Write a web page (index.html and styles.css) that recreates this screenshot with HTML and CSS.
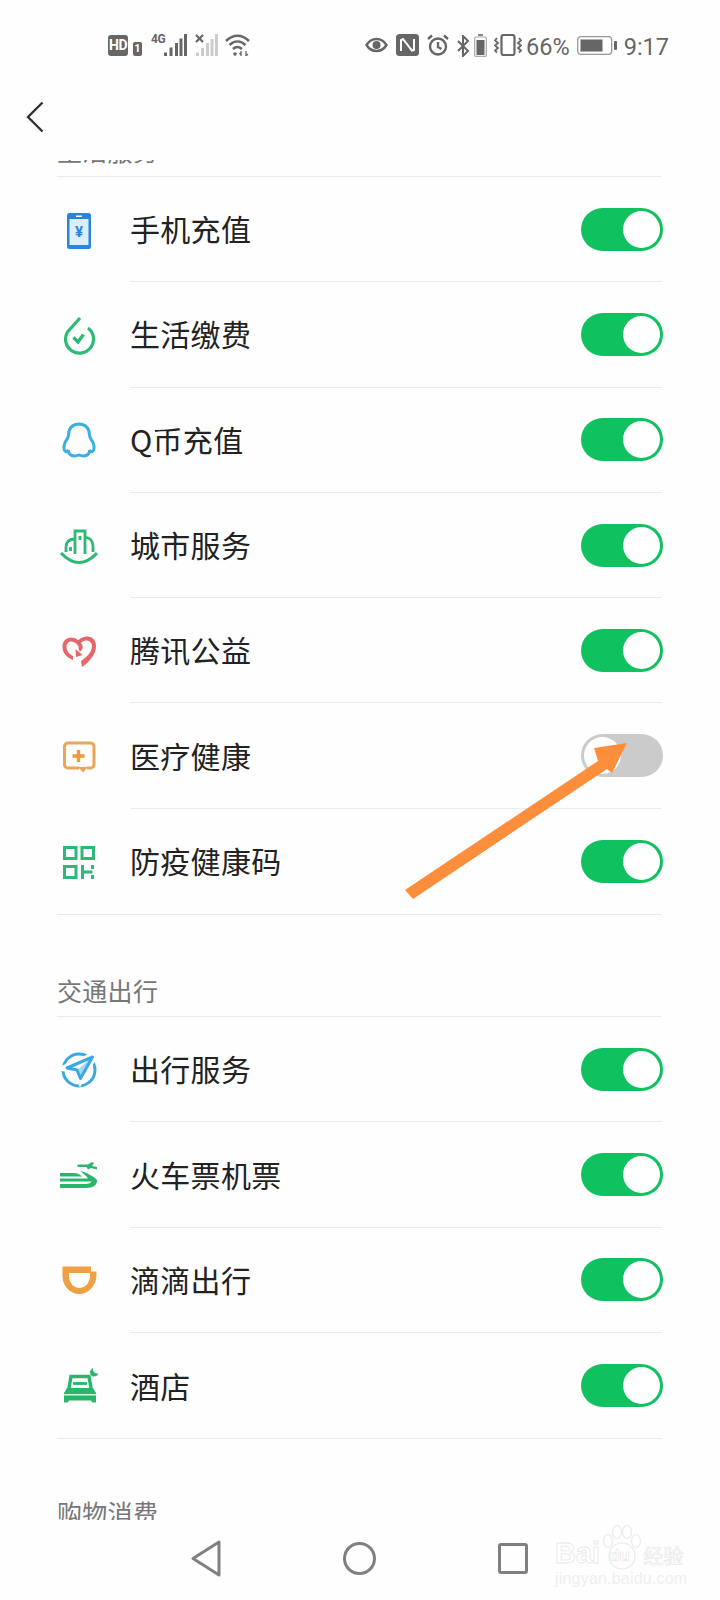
FILE: index.html
```html
<!DOCTYPE html>
<html lang="zh-CN">
<head>
    <meta charset="UTF-8" />
    <meta name="viewport" content="width=device-width, initial-scale=1.0">
    <title>服务管理</title>
    <link rel="stylesheet" href="styles.css">
</head>
<body>
<div class="phone">
    <div class="status-bar">
        <div class="status-left">
            <span class="hd-badge">HD</span>
            <span class="sim-badge">1</span>
            <span class="net-label">4G</span>
            <svg class="bars" width="24" height="22" viewBox="0 0 24 22"><path d="M1 18.500h3V22H1zM6.500 13.500h3V22h-3zM12 9h3v13h-3zM16.500 4.500h3V22h-3zM21 0h3v22h-3z" fill="#666"/></svg>
            <svg class="bars-off" width="23" height="22" viewBox="0 0 23 22"><path d="M1 18.500h3V22H1zM6 14h3v8H6zM11 9h3v13h-3zM15.500 5h3v17h-3zM20 0h3v22h-3z" fill="#ccc"/><path d="M1 1l7 7M8 1L1 8" stroke="#666" stroke-width="2.200"/></svg>
            <svg class="wifi" width="25" height="22" viewBox="0 0 25 22" fill="none" stroke="#666" stroke-width="2.500"><path d="M1 7c7-7 16-7 23 0M4.500 11c5-4.800 11-4.800 16 0M8 15c2.800-2.500 6-2.500 9 0"/><circle cx="10" cy="20" r="1.800" fill="#666" stroke="none"/><path d="M16 17v5M21 17v5M14.500 20l2-2M23 20l-2 2" stroke-width="1.300"/></svg>
        </div>
        <div class="status-right">
            <svg width="23" height="22" viewBox="0 0 23 22" fill="none" stroke="#666" stroke-width="2.400"><path d="M1.500 11c5-8 15-8 20 0-5 8-15 8-20 0z"/><circle cx="11.500" cy="11" r="4" fill="#666" stroke="none"/></svg>
            <svg width="23" height="22" viewBox="0 0 23 22"><rect width="23" height="22" rx="3.500" fill="#666"/><path d="M5 17V6l2-1 9 11.500 2-.5V5" fill="none" stroke="#fff" stroke-width="2"/></svg>
            <svg width="22" height="22" viewBox="0 0 22 22" fill="none" stroke="#666" stroke-width="2.400"><circle cx="11" cy="12.500" r="8"/><path d="M11 8v5l3.500 2M1 5l4-3.500M21 5l-4-3.500"/></svg>
            <svg class="bt" width="13" height="22" viewBox="0 0 13 22" fill="none" stroke="#666" stroke-width="2"><path d="M1 6l10 10-5 5V1l5 5L1 16"/></svg>
            <svg class="mini-batt" width="13" height="23" viewBox="0 0 13 23"><rect x=".7" y="3" width="11.600" height="19.300" rx="1" fill="none" stroke="#aaa" stroke-width="1.200"/><rect x="2.500" y="6" width="8" height="15" fill="#666"/><rect x="4" width="5" height="2" fill="#888"/></svg>
            <svg class="vib" width="28" height="22" viewBox="0 0 28 22" fill="none" stroke="#666" stroke-width="2.200"><rect x="7.500" y="1" width="13" height="20" rx="2"/><path d="M3 4l-2 2.500L4 9l-3 2.500L4 14l-3 2.500L3 18.500M25 4l2 2.500L24 9l3 2.500L24 14l3 2.500L25 18.500" stroke-width="1.800"/></svg>
            <span class="status-text">66%</span>
            <svg class="batt" width="40" height="19" viewBox="0 0 40 19"><rect x=".7" y=".7" width="34" height="17.600" rx="3" fill="none" stroke="#999" stroke-width="1.300"/><rect x="3.500" y="3.500" width="22" height="12" fill="#666"/><rect x="37" y="5" width="3" height="9" rx="1" fill="#666"/></svg>
            <span class="status-text time">9:17</span>
        </div>
    </div>

    <header class="top-bar">
        <svg class="back" width="18" height="32" viewBox="0 0 18 32" fill="none" stroke="#333" stroke-width="2.400"><path d="M16.500 1.500L2 16l14.500 14.500"/></svg>
    </header>

    <main class="scroller">
        <div class="scroll-inner">
            <h2 class="sec-title">生活服务</h2>
            <section class="group">
                <div class="row">
                    <div class="row-icon">
                        <svg width="40" height="40" viewBox="0 0 40 40"><rect x="9" y="3" width="24" height="36" rx="2.500" fill="#2a84d8"/><rect x="11.500" y="9" width="19" height="26" fill="#dcedfb"/><rect x="18" y="5.500" width="6" height="1.500" fill="#fff"/><text class="yen" x="21" y="27" text-anchor="middle">¥</text></svg>
                    </div>
                    <div class="row-body"><span class="row-label">手机充值</span><span class="toggle on"><i class="knob"></i></span></div>
                </div>
                <div class="row">
                    <div class="row-icon">
                        <svg width="40" height="40" viewBox="0 0 40 40" fill="none" stroke="#2dba74" stroke-width="3.200"><path d="M22 3L9.500 17A14 14 0 1 0 30 13"/><path d="M15.500 22.500l4.500 4.500 5.500-7.500" stroke-width="3.400"/></svg>
                    </div>
                    <div class="row-body"><span class="row-label">生活缴费</span><span class="toggle on"><i class="knob"></i></span></div>
                </div>
                <div class="row">
                    <div class="row-icon">
                        <svg width="40" height="40" viewBox="0 0 40 40" fill="none" stroke="#3bb0e0" stroke-width="3"><path d="M21 4c-7 0-10.500 5-10.500 11 0 3-2 4.500-3.500 7.500-1.500 3.500-1.500 8 .5 9 1.500.5 2.500-.5 3-1.500-.5 4 3 6 6 6 2 0 3.500-1 4.500-1s2.500 1 4.500 1c3 0 6.500-2 6-6 .5 1 1.500 2 3 1.500 2-1 2-5.500.5-9-1.500-3-3.500-4.500-3.500-7.500C31.500 9 28 4 21 4z"/></svg>
                    </div>
                    <div class="row-body"><span class="row-label">Q币充值</span><span class="toggle on"><i class="knob"></i></span></div>
                </div>
                <div class="row">
                    <div class="row-icon">
                        <svg width="40" height="40" viewBox="0 0 40 40" fill="none" stroke="#2fb776" stroke-width="2.800"><path d="M3 27q18 19 36 0" stroke-width="3.200"/><path d="M17 28V5h10v23M17 13c-6 0-9 3-9 8v5M27 11c5 1 8 4 8 9v6M12.500 21v4M22 10v4"/></svg>
                    </div>
                    <div class="row-body"><span class="row-label">城市服务</span><span class="toggle on"><i class="knob"></i></span></div>
                </div>
                <div class="row">
                    <div class="row-icon">
                        <svg width="40" height="40" viewBox="0 0 40 40" fill="#e2686a"><path d="M24 36C33 30 38 22 38 15 38 8 33 5 28 5.500 24 6 21 8 19 10.500L22 13C24 10.500 26 9.500 28 9.500 31 9.500 34 11.500 34 15 34 21 29 26 23 30z"/><path d="M15 29C8 26 4.500 22 4.500 15.500 4.500 10 8.500 6.500 13 6.500 18 6.500 22 10 24 13.500 25.500 16.500 24.500 19.500 21.500 20.500L20.500 17C21 16 20.500 15 19.500 14 18 12 15.500 10.500 13 10.500 10.500 10.500 8.500 12.500 8.500 15.500 8.500 20 11 23 15 25z"/><path d="M17.500 18L24.500 24 18 26z"/></svg>
                    </div>
                    <div class="row-body"><span class="row-label">腾讯公益</span><span class="toggle on"><i class="knob"></i></span></div>
                </div>
                <div class="row">
                    <div class="row-icon">
                        <svg width="40" height="40" viewBox="0 0 40 40" fill="none" stroke="#eba655" stroke-width="3"><path d="M21 32H10a3.500 3.500 0 0 1-3.500-3.500v-18A3.500 3.500 0 0 1 10 7h22.500a3.500 3.500 0 0 1 3.500 3.500v18a3.500 3.500 0 0 1-3.500 3.500H29"/><path d="M20 31h10l-5 5.500z" fill="#eba655" stroke="none"/><path d="M20.500 14v12M14.500 20h12" stroke="#ee9a38" stroke-width="3.400"/></svg>
                    </div>
                    <div class="row-body"><span class="row-label">医疗健康</span><span class="toggle off"><i class="knob"></i></span></div>
                </div>
                <div class="row">
                    <div class="row-icon">
                        <svg width="40" height="40" viewBox="0 0 40 40" fill="none" stroke="#2fb776" stroke-width="3"><rect x="6.500" y="6.500" width="11.500" height="11"/><rect x="24" y="6.500" width="11.500" height="11"/><rect x="6.500" y="25.500" width="11.500" height="11"/><path d="M24.500 24v14M24.500 31h10M34.500 24v4M34.500 34v4"/></svg>
                    </div>
                    <div class="row-body"><span class="row-label">防疫健康码</span><span class="toggle on"><i class="knob"></i></span></div>
                </div>
            </section>

            <h2 class="sec-title">交通出行</h2>
            <section class="group">
                <div class="row">
                    <div class="row-icon">
                        <svg width="40" height="40" viewBox="0 0 40 40" fill="none"><circle cx="21" cy="20" r="16" stroke="#3aa9e0" stroke-width="3"/><path d="M35 6.500L9 18l10 2 3.500 8.500z" fill="#fff" stroke="#fff" stroke-width="8"/><path d="M34.500 7L9 18l10 2 3.500 8.500z" fill="#fff" stroke="#3aa9e0" stroke-width="3" stroke-linejoin="round"/><path d="M34.500 7L19 20l3.500 8.500z" fill="#3aa9e0" fill-opacity=".45"/></svg>
                    </div>
                    <div class="row-body"><span class="row-label">出行服务</span><span class="toggle on"><i class="knob"></i></span></div>
                </div>
                <div class="row">
                    <div class="row-icon">
                        <svg width="40" height="40" viewBox="0 0 40 40" fill="#2ab56b"><path d="M19.500 9.500H30L34 7l2 1-2 3 5 1v2.500l-6-1.500-3 1.500-1.500-2.500H19.500z"/><path d="M2 18h14c3 0 6 1.500 8 3.500H2z"/><path d="M22 16C28 17 35 21 39 25 39.500 30 35 33 28 33H2V29H28C31 29 33 28 33.500 26.500H2V23.500H30C28 20.500 25 18 22 16z"/></svg>
                    </div>
                    <div class="row-body"><span class="row-label">火车票机票</span><span class="toggle on"><i class="knob"></i></span></div>
                </div>
                <div class="row">
                    <div class="row-icon">
                        <svg width="40" height="40" viewBox="0 0 40 40"><path fill-rule="evenodd" fill="#f0a044" d="M4.500 6.500H33V11.500H38.500V15C38.500 26 30 34 21.500 34 12 34 4.500 26 4.500 16zM11 13V16C11 23 16 28 21.500 28 27 28 32 23 32 16V13z"/></svg>
                    </div>
                    <div class="row-body"><span class="row-label">滴滴出行</span><span class="toggle on"><i class="knob"></i></span></div>
                </div>
                <div class="row">
                    <div class="row-icon">
                        <svg width="40" height="40" viewBox="0 0 40 40"><path d="M35 2c-.5 3.500 1.500 6 5.500 5.500-1.500 4-8.500 4-8.500-1 0-2 1.500-3.500 3-4.500z" fill="#2ab56b"/><path d="M10.500 25l2.500-14.500h18L33.500 25" fill="none" stroke="#2ab56b" stroke-width="3.400"/><path d="M15 17.500h14" stroke="#2ab56b" stroke-width="2.800"/><path d="M6 27l3-5h26l3 5v9.500h-3.500L33 34.500H11l-1.500 2H6z" fill="#2ab56b"/><rect x="6" y="28" width="32" height="1.500" fill="#d5f3e1"/></svg>
                    </div>
                    <div class="row-body"><span class="row-label">酒店</span><span class="toggle on"><i class="knob"></i></span></div>
                </div>
            </section>

            <h2 class="sec-title last">购物消费</h2>
        </div>
    </main>

    <nav class="nav-bar">
        <svg width="30" height="37" viewBox="0 0 30 37" fill="none" stroke="#808080" stroke-width="3" stroke-linejoin="round"><path d="M28 2v33L2 18.500z"/></svg>
        <svg width="33" height="33" viewBox="0 0 33 33" fill="none" stroke="#808080" stroke-width="3"><circle cx="16.500" cy="16.500" r="15"/></svg>
        <svg width="30" height="31" viewBox="0 0 30 31" fill="none" stroke="#808080" stroke-width="3" stroke-linejoin="round"><rect x="1.500" y="1.500" width="27" height="28" rx="1.500"/></svg>
    </nav>

    <!-- annotation arrow on top of the screenshot -->
    <svg class="arrow" width="720" height="1600" viewBox="0 0 720 1600"><polygon points="405,890 598,761 594,748 627,743 612,773 607,769 413,899" fill="#fd8e3b"/></svg>

    <div class="watermark">
        <div class="wm-top">
            <span class="wm-latin">Bai</span>
            <span class="wm-paw">
                <svg width="42" height="46" viewBox="0 0 42 46" fill="none" stroke="#ebebeb" stroke-width="1.200"><ellipse cx="8" cy="17" rx="4.500" ry="6.500"/><ellipse cx="17" cy="8" rx="4.500" ry="6.500"/><ellipse cx="27" cy="8" rx="4.500" ry="6.500"/><ellipse cx="36" cy="17" rx="4.500" ry="6.500"/><circle cx="22" cy="32" r="13"/></svg>
                <span class="wm-du">du</span>
            </span>
            <span class="wm-cn">经验</span>
        </div>
        <div class="wm-url">jingyan.baidu.com</div>
    </div>
</div>
</body>
</html>
```

FILE: styles.css
```css
body {
    margin: 0;
    background: #fff;
    font-family: "Noto Sans CJK SC", "Noto Sans", sans-serif;
    color: #222;
}

.phone {
    position: relative;
    width: 720px;
    height: 1600px;
    overflow: hidden;
    background: #fefefe;
    display: flex;
    flex-direction: column;
}

/* status bar */
.status-bar {
    height: 77px;
    box-sizing: border-box;
    padding: 34px 51px 0 108px;
    display: flex;
    justify-content: space-between;
    align-items: flex-start;
    flex-shrink: 0;
}

.status-left,
.status-right {
    display: flex;
    align-items: flex-start;
}

.hd-badge {
    width: 20px;
    height: 21px;
    margin-top: 1px;
    background: #666;
    border-radius: 3px;
    color: #fff;
    font: bold 14px/21px "Roboto", sans-serif;
    letter-spacing: -0.5px;
    text-align: center;
}

.sim-badge {
    width: 9px;
    height: 14px;
    margin: 8px 9px 0 5px;
    background: #666;
    border-radius: 2px;
    color: #fff;
    font: bold 11px/14px "Roboto", sans-serif;
    text-align: center;
}

.net-label {
    width: 12px;
    font: bold 12px/11px "Roboto", sans-serif;
    color: #666;
    letter-spacing: -0.5px;
}

.bars-off {
    margin-left: 8px;
}

.wifi {
    margin-left: 7px;
}

.status-right svg {
    margin-right: 8px;
}

.status-right .bt {
    margin: 1px 4px 0 0;
}

.status-right .mini-batt {
    margin-right: 7px;
}

.status-right .vib {
    margin-right: 4px;
}

.status-right .batt {
    margin: 2px 7px 0 7px;
}

.status-text {
    margin-top: 1px;
    font: 23.5px/24px "Roboto", sans-serif;
    color: #666;
}

/* top bar */
.top-bar {
    height: 83px;
    box-sizing: border-box;
    padding: 24px 0 0 26px;
    flex-shrink: 0;
}

.back {
    display: block;
}

/* scrolled list */
.scroller {
    height: 1360px;
    overflow: hidden;
    flex-shrink: 0;
}

.scroll-inner {
    margin-top: -85px;
    padding: 0 58px 0 57px;
}

.sec-title {
    height: 101px;
    box-sizing: border-box;
    margin: 0;
    padding-top: 59px;
    font-size: 25px;
    font-weight: 400;
    letter-spacing: 0.3px;
    line-height: 32px;
    color: #777;
}

.sec-title.last {
    padding-top: 57px;
}

.group {
    border-top: 1px solid #ebebeb;
    border-bottom: 1px solid #ebebeb;
}

.row {
    display: flex;
    height: 105.3px;
}

.row-icon {
    width: 73px;
    display: flex;
    align-items: center;
    flex-shrink: 0;
}

.row-icon svg {
    display: block;
    margin-left: 1px;
}

.row-body {
    flex: 1;
    display: flex;
    align-items: center;
    justify-content: space-between;
    border-bottom: 1px solid #ebebeb;
}

.row:last-child .row-body {
    border-bottom: none;
}

.row-label {
    padding-bottom: 2px;
    font-size: 30px;
    letter-spacing: 0.3px;
    line-height: 40px;
}

.yen {
    font: bold 15px "Roboto", sans-serif;
    fill: #2a84d8;
}

/* switches */
.toggle {
    width: 82px;
    height: 43px;
    box-sizing: border-box;
    margin-right: -1px;
    padding: 3px;
    border-radius: 22px;
    display: flex;
}

.toggle.on {
    background: #10c15f;
    justify-content: flex-end;
}

.toggle.off {
    background: #cbcbcb;
}

.knob {
    width: 37px;
    height: 37px;
    border-radius: 50%;
    background: #fff;
}

/* bottom nav */
.nav-bar {
    flex: 1;
    box-sizing: border-box;
    padding: 20px 192px 0 191px;
    display: flex;
    justify-content: space-between;
    align-items: flex-start;
}

.nav-bar svg:nth-child(2) {
    margin-top: 2px;
}

.nav-bar svg:nth-child(3) {
    margin-top: 3px;
}

/* overlays */
.arrow {
    position: absolute;
    left: 0;
    top: 0;
    pointer-events: none;
}

.watermark {
    position: absolute;
    left: 555px;
    top: 1520px;
    width: 132px;
    color: #fff;
}

.wm-top {
    display: flex;
    align-items: flex-end;
    height: 50px;
}

.wm-latin {
    font: bold 29px/32px "Liberation Sans", sans-serif;
    -webkit-text-stroke: 0.8px #e8e8e8;
    margin-bottom: 1px;
}

.wm-paw {
    position: relative;
    width: 42px;
    height: 46px;
    flex-shrink: 0;
}

.wm-paw svg {
    display: block;
}

.wm-du {
    position: absolute;
    left: 9px;
    top: 22px;
    font: bold 17px/20px "Liberation Sans", sans-serif;
    -webkit-text-stroke: 0.7px #e8e8e8;
}

.wm-cn {
    font-size: 20px;
    line-height: 28px;
    margin-left: 1px;
    -webkit-text-stroke: 0.7px #e8e8e8;
}

.wm-url {
    font: 16px/18px "Liberation Sans", sans-serif;
    color: #efefef;
    letter-spacing: 0.2px;
}
```
